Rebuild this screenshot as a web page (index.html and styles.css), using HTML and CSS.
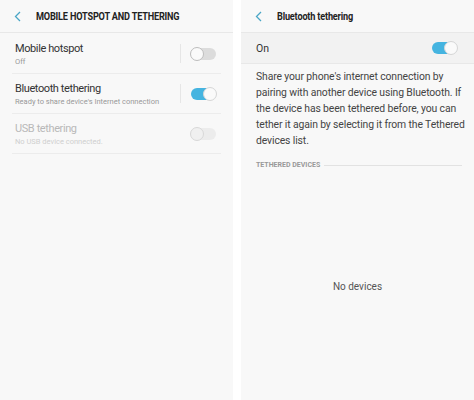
FILE: index.html
```html
<!DOCTYPE html>
<html lang="en">
<head>
    <meta charset="UTF-8">
    <title>Tethering</title>
    <link rel="stylesheet" href="styles.css">
</head>
<body>
    <div class="screen">
        <div class="header">
            <svg class="back" width="7" height="11" viewBox="0 0 7 11"><path d="M6 1 L1.5 5.5 L6 10" fill="none" stroke="#4aa6c6" stroke-width="1.3"/></svg>
            <span class="title">MOBILE HOTSPOT AND TETHERING</span>
        </div>
        <div class="list">
            <div class="item">
                <div class="text">
                    <div class="name">Mobile hotspot</div>
                    <div class="sub">Off</div>
                </div>
                <div class="sep"></div>
                <div class="toggle"></div>
            </div>
            <div class="item">
                <div class="text">
                    <div class="name">Bluetooth tethering</div>
                    <div class="sub">Ready to share device's Internet connection</div>
                </div>
                <div class="sep"></div>
                <div class="toggle on"></div>
            </div>
            <div class="item disabled">
                <div class="text">
                    <div class="name">USB tethering</div>
                    <div class="sub">No USB device connected.</div>
                </div>
                <div class="toggle"></div>
            </div>
        </div>
    </div>

    <div class="screen">
        <div class="header">
            <svg class="back" width="7" height="11" viewBox="0 0 7 11"><path d="M6 1 L1.5 5.5 L6 10" fill="none" stroke="#4aa6c6" stroke-width="1.3"/></svg>
            <span class="title">Bluetooth tethering</span>
        </div>
        <div class="switch-row">
            <span>On</span>
            <div class="toggle on"></div>
        </div>
        <p class="info">Share your phone's internet connection by pairing with another device using Bluetooth. If the device has been tethered before, you can tether it again by selecting it from the Tethered devices list.</p>
        <div class="section">
            <span>TETHERED DEVICES</span>
            <div class="rule"></div>
        </div>
        <div class="empty">No devices</div>
    </div>
</body>
</html>
```

FILE: styles.css
```css
body {
    margin: 0;
    background: #fff;
    display: flex;
    gap: 8px;
    font-family: Roboto, "Liberation Sans", sans-serif;
}
.screen {
    width: 233px;
    height: 400px;
    background: #f8f8f8;
    display: flex;
    flex-direction: column;
}
.header {
    height: 32px;
    border-bottom: 1px solid #e8e8e8;
    display: flex;
    align-items: center;
    padding-left: 14px;
}
.back {
    margin-right: 15px;
}
/* the phone font is condensed, squeeze the bold titles */
.title {
    font-size: 10.5px;
    font-weight: bold;
    color: #222;
    letter-spacing: -0.2px;
    transform: scaleX(0.87);
    transform-origin: left center;
    white-space: nowrap;
}
.list {
    padding: 1px 12px 0;
}
.item {
    height: 39px;
    border-bottom: 1px solid #ececec;
    display: flex;
    align-items: center;
    padding: 0 5px 0 3px;
}
.text {
    flex: 1;
}
.name {
    font-size: 11px;
    color: #333;
    letter-spacing: -0.4px;
}
.sub {
    font-size: 7.5px;
    color: #999;
    margin-top: 2px;
}
.disabled .name {
    color: #b8b8b8;
}
.disabled .sub {
    color: #cfcfcf;
}
.sep {
    width: 1px;
    height: 19px;
    background: #e6e6e6;
    margin-right: 10px;
}
.toggle {
    width: 25px;
    height: 12px;
    border-radius: 7px;
    background: #dcdcdc;
    position: relative;
}
.toggle::after {
    content: "";
    position: absolute;
    top: -1px;
    left: -1px;
    width: 12px;
    height: 12px;
    border-radius: 50%;
    background: #fafafa;
    border: 1px solid #bdbdbd;
}
.toggle.on {
    background: #45b4e0;
}
.toggle.on::after {
    left: auto;
    right: -1px;
    border-color: #d6d6d6;
}
.disabled .toggle {
    background: #ececec;
}
.disabled .toggle::after {
    border-color: #d8d8d8;
    background: #f0f0f0;
}
.switch-row {
    height: 30px;
    background: #f2f2f2;
    border-bottom: 1px solid #e8e8e8;
    display: flex;
    align-items: center;
    justify-content: space-between;
    padding: 0 17px 0 15px;
    font-size: 10.5px;
    color: #333;
}
.info {
    margin: 0;
    padding: 5px 6px 0 15px;
    font-size: 10.4px;
    line-height: 16px;
    color: #444;
    letter-spacing: -0.12px;
}
.section {
    display: flex;
    align-items: center;
    gap: 4px;
    padding: 0 12px 0 15px;
    margin-top: 12px;
    font-size: 7px;
    line-height: 8px;
    font-weight: bold;
    color: #999;
}
.rule {
    flex: 1;
    height: 1px;
    background: #e2e2e2;
}
.empty {
    text-align: center;
    margin-top: 112px;
    font-size: 10px;
    line-height: 12px;
    color: #555;
}
```
